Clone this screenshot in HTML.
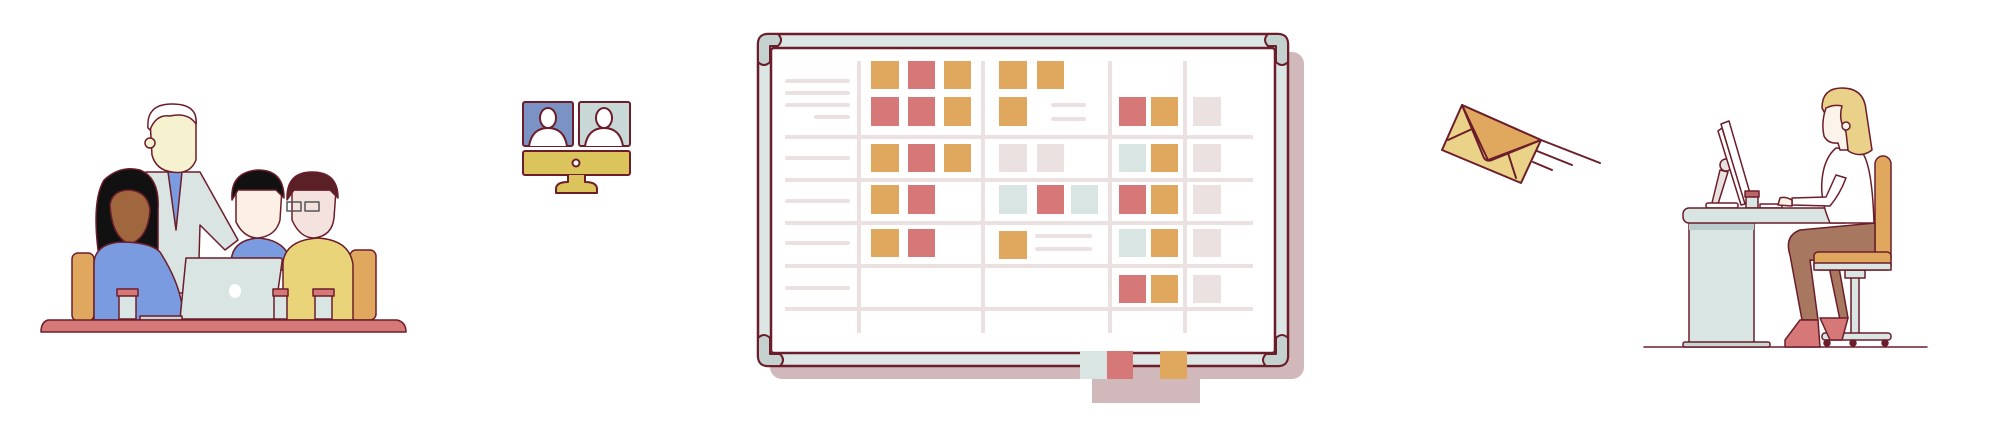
<!DOCTYPE html>
<html><head><meta charset="utf-8"><style>html,body{margin:0;padding:0;background:#fff}svg{display:block}</style></head>
<body>
<svg width="2000" height="425" viewBox="0 0 2000 425" xmlns="http://www.w3.org/2000/svg" stroke-linejoin="round" stroke-linecap="round">
<!-- LEFT SCENE -->
<g stroke="#6b1d2a" stroke-width="1.5">
 <rect x="72" y="253" width="22" height="68" rx="6" fill="#e0a85f"/>
 <rect x="350" y="250" width="26" height="70" rx="6" fill="#e0a85f"/>
 <!-- old man coat -->
 <path d="M146 172 L200 172 L238 240 L225 250 L200 225 L198 293 L150 293 Z" fill="#dae4e2"/>
 <path d="M168 172 L176 230 L182 172 Z" fill="#7b9be0"/>
 <!-- old man head -->
 <path d="M150 120 Q150 105 172 105 Q196 106 196 122 L196 160 Q190 175 172 172 Q156 170 152 155 Z" fill="#f6f2cf"/>
 <path d="M148 128 Q146 104 172 104 Q198 104 196 124 Q188 112 170 116 Q156 114 150 130 Z" fill="#fff"/>
 <circle cx="150" cy="143" r="5" fill="#f6f2cf"/>
 <!-- woman -->
 <path d="M98 250 Q92 200 104 180 Q120 165 140 170 Q160 178 158 210 L158 250 Z" fill="#111"/>
 <path d="M110 205 Q112 190 130 190 Q148 192 150 210 Q148 238 130 244 Q112 238 110 205 Z" fill="#a0673f"/>
 <path d="M94 262 Q96 244 120 242 Q150 242 160 252 Q178 280 182 305 L182 320 L94 320 Z" fill="#7b9be0"/>
 <!-- middle man -->
 <path d="M231 262 Q232 240 258 238 Q286 240 291 262 L291 270 L231 270 Z" fill="#7b9be0"/>
 <path d="M236 188 L236 222 Q244 238 258 238 Q276 236 280 220 L282 188 Z" fill="#fcf0e4"/>
 <path d="M232 200 Q230 172 258 170 Q284 170 284 198 L276 190 L238 190 Z" fill="#111"/>
 <!-- glasses man -->
 <path d="M283 262 Q286 240 318 238 Q350 240 353 265 L353 320 L283 320 Z" fill="#e9d47a"/>
 <path d="M292 190 L292 220 Q300 238 314 238 Q332 236 334 218 L336 190 Z" fill="#f4e2df"/>
 <path d="M287 200 Q286 172 312 172 Q338 172 338 198 L330 190 L294 190 Z" fill="#5a2026"/>
 <rect x="287" y="202" width="14" height="9" fill="none" stroke="#555"/>
 <rect x="305" y="202" width="14" height="9" fill="none" stroke="#555"/>
 <!-- laptop -->
 <path d="M186 258 L280 258 Q283 258 282 262 L274 319 L180 319 Z" fill="#d9e5e3"/>
 <ellipse cx="235" cy="291" rx="6" ry="7" fill="#fff" stroke="none"/>
 <rect x="140" y="316" width="42" height="4" fill="#c8d6d4"/>
 <!-- cups -->
 <g fill="#d9e5e3">
  <rect x="119" y="295" width="17" height="24"/><rect x="117" y="289" width="21" height="7" fill="#d67878"/>
  <rect x="274" y="295" width="13" height="24"/><rect x="273" y="289" width="15" height="7" fill="#d67878"/>
  <rect x="315" y="295" width="17" height="24"/><rect x="313" y="289" width="21" height="7" fill="#d67878"/>
 </g>
 <!-- table -->
 <path d="M48 320 L397 320 Q406 322 406 332 L41 332 Q41 322 48 320 Z" fill="#d67878"/>
</g>

<!-- MONITOR ICON -->
<g stroke="#6b1d2a" stroke-width="2">
 <rect x="523" y="102" width="50" height="44" rx="2" fill="#7b93c4"/>
 <rect x="579" y="102" width="51" height="44" rx="2" fill="#c8d8d6"/>
 <path d="M529 146 Q532 128 548 128 Q564 128 567 146" fill="#fff"/>
 <ellipse cx="548" cy="118" rx="8" ry="10" fill="#fff"/>
 <path d="M585 146 Q588 128 604 128 Q620 128 623 146" fill="#fff"/>
 <ellipse cx="604" cy="118" rx="8" ry="10" fill="#fff"/>
 <rect x="523" y="151" width="107" height="24" rx="2" fill="#dcc45c"/>
 <circle cx="576" cy="163" r="3.5" fill="#fff"/>
 <path d="M568 175 L568 182 Q556 182 556 189 L556 193 L597 193 L597 189 Q597 182 585 182 L585 175" fill="#dcc45c"/>
</g>

<!-- WHITEBOARD -->
<rect x="770" y="52" width="534" height="327" rx="12" fill="#d1b9bb"/>
<rect x="1092" y="372" width="108" height="31" fill="#d1b9bb"/>
<rect x="758" y="34" width="530" height="332" rx="10" fill="#dce6e4" stroke="#6b1d2a" stroke-width="2.5"/>
<rect x="771" y="48" width="504" height="305" rx="3" fill="#fff" stroke="#6b1d2a" stroke-width="2.5"/>
<g fill="#c3d1cf" stroke="#6b1d2a" stroke-width="2">
 <path d="M758 44 Q758 34 768 34 L778 34 Q784 40 778 46 L770 46 L770 62 Q764 68 758 62 Z"/>
 <path d="M1288 44 Q1288 34 1278 34 L1268 34 Q1262 40 1268 46 L1276 46 L1276 62 Q1282 68 1288 62 Z"/>
 <path d="M758 356 Q758 366 768 366 L780 366 Q786 360 780 354 L770 354 L770 338 Q764 332 758 338 Z"/>
 <path d="M1288 356 Q1288 366 1278 366 L1266 366 Q1260 360 1266 354 L1276 354 L1276 338 Q1282 332 1288 338 Z"/>
</g>
<g fill="#ebe1e0">
 <rect x="857" y="61" width="4" height="272"/><rect x="981" y="61" width="4" height="272"/>
 <rect x="1108" y="61" width="4" height="272"/><rect x="1183" y="61" width="4" height="272"/>
 <rect x="785" y="135" width="468" height="4"/><rect x="785" y="178" width="468" height="4"/>
 <rect x="785" y="221" width="468" height="4"/><rect x="785" y="264" width="468" height="4"/>
 <rect x="785" y="307" width="468" height="4"/>
 <rect x="785" y="79" width="65" height="4" rx="2"/><rect x="785" y="91" width="65" height="4" rx="2"/>
 <rect x="785" y="103" width="65" height="4" rx="2"/><rect x="814" y="115" width="36" height="4" rx="2"/>
 <rect x="785" y="156" width="65" height="4" rx="2"/><rect x="785" y="199" width="65" height="4" rx="2"/>
 <rect x="785" y="241" width="65" height="4" rx="2"/><rect x="785" y="286" width="65" height="4" rx="2"/>
 <rect x="1051" y="103" width="35" height="4" rx="2"/><rect x="1051" y="117" width="35" height="4" rx="2"/>
 <rect x="1035" y="234" width="57" height="4" rx="2"/><rect x="1035" y="247" width="57" height="4" rx="2"/>
 <rect x="1193" y="97" width="28" height="29"/><rect x="1193" y="144" width="28" height="28"/>
 <rect x="1193" y="185" width="28" height="29"/><rect x="1193" y="229" width="28" height="28"/>
 <rect x="1193" y="275" width="28" height="28"/>
 <rect x="999" y="144" width="28" height="28"/><rect x="1037" y="144" width="27" height="28"/>
</g>
<g fill="#e0a85f">
 <rect x="871" y="61" width="28" height="28"/><rect x="944" y="61" width="27" height="28"/>
 <rect x="999" y="61" width="28" height="28"/><rect x="1037" y="61" width="27" height="28"/>
 <rect x="944" y="97" width="27" height="29"/><rect x="999" y="97" width="28" height="29"/>
 <rect x="1151" y="97" width="27" height="29"/>
 <rect x="871" y="144" width="28" height="28"/><rect x="944" y="144" width="27" height="28"/>
 <rect x="1151" y="144" width="27" height="28"/>
 <rect x="871" y="185" width="28" height="29"/><rect x="1151" y="185" width="27" height="29"/>
 <rect x="871" y="229" width="28" height="28"/><rect x="999" y="231" width="28" height="28"/>
 <rect x="1151" y="229" width="27" height="28"/><rect x="1151" y="275" width="27" height="28"/>
 <rect x="1160" y="351" width="27" height="28"/>
</g>
<g fill="#d67878">
 <rect x="908" y="61" width="27" height="28"/><rect x="871" y="97" width="28" height="29"/>
 <rect x="908" y="97" width="27" height="29"/><rect x="1119" y="97" width="27" height="29"/>
 <rect x="908" y="144" width="27" height="28"/><rect x="908" y="185" width="27" height="29"/>
 <rect x="1037" y="185" width="27" height="29"/><rect x="1119" y="185" width="27" height="29"/>
 <rect x="908" y="229" width="27" height="28"/><rect x="1119" y="275" width="27" height="28"/>
 <rect x="1107" y="351" width="26" height="28"/>
</g>
<g fill="#d9e5e3">
 <rect x="999" y="185" width="28" height="29"/><rect x="1071" y="185" width="27" height="29"/>
 <rect x="1119" y="144" width="27" height="28"/><rect x="1119" y="229" width="27" height="28"/>
 <rect x="1080" y="351" width="27" height="28"/>
</g>

<!-- ENVELOPE -->
<g stroke="#6b1d2a" stroke-width="2">
 <path d="M1462 105 L1541 140 L1521 183 L1442 150 Z" fill="#ead389"/>
 <path d="M1462 105 L1541 140 L1488 160 Z" fill="#e0a85f"/>
 <path d="M1462 105 L1484 158 Q1487 162 1492 160 L1541 140" fill="none"/>
 <path d="M1448 140 L1472 129 M1508 153 L1516 178" fill="none"/>
 <path d="M1541 140 L1600 163 M1537 151 L1572 165 M1533 162 L1552 170" fill="none"/>
</g>

<!-- DESK SCENE -->
<g stroke="#6b1d2a" stroke-width="1.5">
 <line x1="1644" y1="347" x2="1927" y2="347"/>
 <path d="M1720 170 L1712 203 L1718 204 L1728 172 Z" fill="#e9e1df"/>
 <circle cx="1726" cy="165" r="6" fill="#e9e1df"/>
 <path d="M1721 124 L1729 121 L1752 200 L1744 203 Z" fill="#fff"/>
 <path d="M1718 131 L1722 128 L1745 204 L1741 205 Z" fill="#fff"/>
 <rect x="1706" y="203" width="32" height="5" rx="2" fill="#fff"/>
 <rect x="1746" y="196" width="12" height="12" fill="#d9e5e3"/><rect x="1745" y="191" width="14" height="6" fill="#b66"/>
 <rect x="1760" y="204" width="22" height="4" fill="#fff"/>
 <rect x="1689" y="222" width="65" height="121" fill="#d9e5e3"/>
 <rect x="1689" y="222" width="65" height="8" fill="#b9cccb" stroke="none"/>
 <rect x="1683" y="342" width="87" height="5" rx="2" fill="#c8d6d4"/>
 <rect x="1683" y="208" width="167" height="15" rx="6" fill="#d9e5e3"/>
 <rect x="1875" y="156" width="16" height="110" rx="8" fill="#e0a85f"/>
 <rect x="1851" y="270" width="8" height="66" fill="#d9e5e3"/>
 <rect x="1845" y="270" width="20" height="8" fill="#d9e5e3"/>
 <rect x="1822" y="333" width="69" height="7" rx="3" fill="#d9e5e3"/>
 <circle cx="1827" cy="343" r="3" fill="#6b1d2a"/><circle cx="1853" cy="343" r="3" fill="#6b1d2a"/><circle cx="1885" cy="343" r="3" fill="#6b1d2a"/>
 <path d="M1875 223 L1800 230 Q1784 236 1790 255 L1802 320 L1818 320 L1810 260 L1828 262 L1840 320 L1848 318 L1838 262 L1875 255 Z" fill="#a8775f"/>
 <path d="M1800 320 L1785 340 L1785 347 L1820 347 L1818 320 Z" fill="#d67878"/>
 <path d="M1820 318 L1830 340 L1842 340 L1848 318 Z" fill="#d67878"/>
 <rect x="1814" y="252" width="77" height="18" rx="4" fill="#e0a85f"/>
 <rect x="1814" y="263" width="77" height="7" fill="#d9e5e3"/>
 <path d="M1836 148 L1860 150 Q1872 160 1874 223 L1830 223 Q1820 200 1822 180 Q1824 158 1836 148 Z" fill="#fff"/>
 <path d="M1836 175 L1826 197 L1792 198 L1792 205 L1830 206 Q1840 194 1846 178 Z" fill="#fff"/>
 <path d="M1780 198 Q1785 196 1792 200 L1792 206 L1778 205 Z" fill="#fcf0e4"/>
 <!-- head: hair behind, face on left -->
 <path d="M1822 108 Q1822 88 1842 88 Q1864 88 1866 110 L1872 150 Q1862 158 1850 152 L1842 146 Z" fill="#e9d18a"/>
 <path d="M1826 108 Q1821 122 1824 136 Q1828 144 1838 143 L1840 150 L1848 150 L1846 132 Q1838 120 1842 106 Q1834 104 1826 108 Z" fill="#fcf3ea"/>
 <circle cx="1846" cy="126" r="4" fill="#fcf3ea"/>
</g>
</svg>
</body></html>
